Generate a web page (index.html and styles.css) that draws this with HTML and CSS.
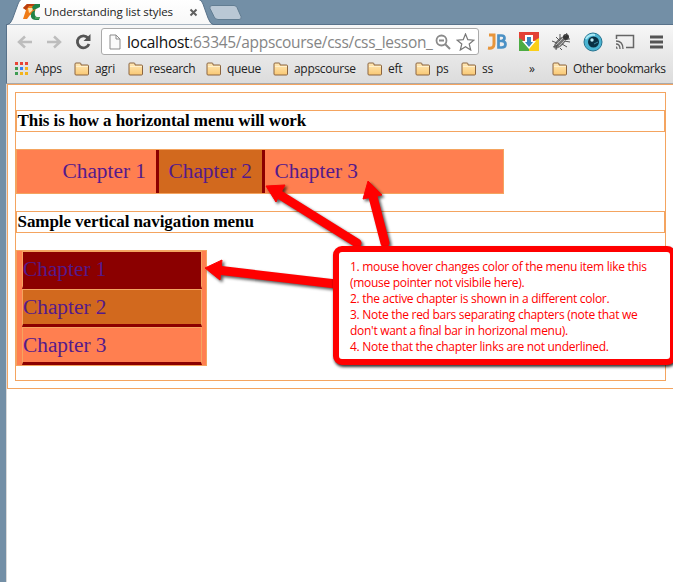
FILE: index.html
```html
<!DOCTYPE html>
<html lang="en">
<head>
<meta charset="utf-8">
<title>Understanding list styles</title>
<link rel="stylesheet" href="styles.css">
</head>
<body>
<svg class="defs" width="0" height="0">
  <defs>
    <linearGradient id="fold" x2="0" y2="1"><stop stop-color="#ffe9b8"/><stop offset="1" stop-color="#f9c873"/></linearGradient>
    <linearGradient id="tabfill" x2="0" y2="1"><stop stop-color="#fff"/><stop offset="1" stop-color="#f7f7f7"/></linearGradient>
    <symbol id="folder" viewBox="0 0 16 14"><path d="M1 12V2q0-1 1-1h4q1 0 1 1v1h6.500q1 0 1 1v8q0 1-1 1H2q-1 0-1-1z" fill="url(#fold)" stroke="#8b6540"/><path d="M2 4.500h12" stroke="#fff0cc"/></symbol>
  </defs>
</svg>
<header class="chrome">
  <div class="tabs">
    <svg class="tabshape" width="250" height="25" viewBox="0 0 250 25"><path d="M6.500 25Q11 24 12.500 19L18 4Q19 0 22 -1H198Q202 0 203 4L208 18Q210 24 214 25z" fill="url(#tabfill)" stroke="#58728a"/><path d="M212 5.500h22q2 0 3 2l4 9q1 3-2 3h-21q-3 0-4-3l-4-8q-1-3 2-3z" fill="#bac8d5" stroke="#627d92"/></svg>
    <svg class="favicon" width="18" height="16" viewBox="0 0 18 16"><path d="M0 4L4 0h8l1 4q-1 6-6 7l-3 4H0l3-9z" fill="#ef7b17"/><path d="M5 4h5q0 3-4 5z" fill="#ffe2a6"/><path d="M0 4l4-4h8l-1 2H6L3 6z" fill="#b93f10"/><path d="M17 0h-5L9 3l1 3 3-1 4-2z" fill="#218347"/><path d="M12 6q-5 2-4 7 1 3 5 3h3l1-3h-3q-3 0-2-7z" fill="#218347"/><path d="M12 14h4" stroke="#72bd70" fill="none"/></svg>
    <span class="title">Understanding list styles</span>
    <svg class="close" width="9" height="9" viewBox="0 0 9 9"><path d="M1.500 1.500l6 6m0-6l-6 6" stroke="#606060" stroke-width="2"/></svg>
  </div>
  <div class="toolbar">
    <svg class="back" width="16" height="14" viewBox="0 0 16 14"><path d="M15 7H2m6-5.500L2 7l6 5.500" fill="none" stroke="#bdbdbd" stroke-width="2.500"/></svg>
    <svg class="forward" width="16" height="14" viewBox="0 0 16 14"><path d="M1 7h13M8 1.500L14 7l-6 5.500" fill="none" stroke="#bdbdbd" stroke-width="2.500"/></svg>
    <svg class="reload" width="17" height="16" viewBox="0 0 17 16"><path d="M13 4A6 6 0 1 0 14 10" fill="none" stroke="#555" stroke-width="2.800"/><path d="M15.500 0v7H8.500z" fill="#555"/></svg>
    <div class="omnibox">
      <svg class="doc" width="12" height="16" viewBox="0 0 12 16"><path d="M1 1h6l4 4v10H1z" fill="#fafafa" stroke="#8b8b8b"/><path d="M7 1v4h4" fill="none" stroke="#8b8b8b"/></svg>
      <span class="url"><b>localhost</b>:63345/appscourse/css/css_lesson_</span>
      <svg class="lens" width="16" height="16" viewBox="0 0 16 16"><circle cx="6.500" cy="6.500" r="5" fill="none" stroke="#8a8a8a" stroke-width="1.800"/><path d="M4 6.500h5M10 10l5 5" stroke="#8a8a8a" stroke-width="2"/></svg>
      <svg class="star" width="19" height="18" viewBox="0 0 19 18"><path d="M9.500 1l2.300 5.700 6 .5-4.600 3.800 1.500 6-5.200-3.300L4.300 17l1.500-6L1.200 7.200l6-.5z" fill="#fff" stroke="#777" stroke-width="1.200"/></svg>
    </div>
    <div class="extensions">
      <svg width="20" height="18" viewBox="0 0 20 18"><path d="M2 2h5v9q0 5-6 4" fill="none" stroke="#e7953b" stroke-width="3"/><path d="M11.500 2.500h3q3 0 3 2.500t-3 3h-3 3q4 0 4 3.200t-4 3.300h-3z" fill="none" stroke="#4b91c5" stroke-width="2.700"/></svg>
      <svg width="20" height="20" viewBox="0 0 20 20"><path d="M0 0h20v19H0z" fill="#e34035"/><path d="M0 6l10 6v7H0z" fill="#4dac43"/><path d="M20 6l-10 6v7h10z" fill="#fbcf19"/><path d="M6 3h8v6h3l-7 8-7-8h3z" fill="#fff"/><path d="M8 5h4v5h2l-4 5-4-5h2z" fill="#3785bd"/></svg>
      <svg width="20" height="18" viewBox="0 0 20 18"><ellipse cx="9" cy="9.500" rx="8" ry="3.600" transform="rotate(-45 9 9.500)" fill="#777"/><circle cx="15" cy="4" r="3" fill="#333"/><path d="M1 8l5 2-1 7M5 4l4 4M9 15l2 2m0-6l5 3m-3-6l6 1M9 6V1m5 2l2-3m0 6l3 0M2 14l5-2" fill="none" stroke="#555"/><path d="M5 12l7-7M8 13l6-6" stroke="#bbb"/></svg>
      <svg width="20" height="20" viewBox="0 0 20 20"><circle cx="10" cy="10" r="9" fill="#4bb4d2" stroke="#267390"/><path d="M3 7q3-5 9-4" stroke="#a6e8f5" stroke-width="2" fill="none"/><circle cx="10.500" cy="10" r="5.500" fill="#092f42"/><circle cx="9" cy="8" r="1.700" fill="#bfeaf4"/><path d="M11 12l4-2" stroke="#3f879f"/></svg>
      <svg width="20" height="16" viewBox="0 0 20 16"><path d="M1.500 5V1.500h17v12H11" fill="none" stroke="#666" stroke-width="1.500"/><path d="M1 7q7 0 7 8M1 10q4 0 4 5M1 13q1 0 1 2" fill="none" stroke="#666" stroke-width="1.300"/></svg>
      <svg class="menu" width="14" height="14" viewBox="0 0 14 14"><path d="M1 2h13M1 7h13M1 12h13" stroke="#555" stroke-width="2.800"/></svg>
    </div>
  </div>
  <div class="bookmarks">
    <svg class="apps" width="14" height="14" viewBox="0 0 14 14"><path d="M0 0h3v3H0zm5 0h3v3H5zm5 0h3v3h-3z" fill="#e84435"/><path d="M0 5h3v3H0zm0 5h3v3H0z" fill="#3f9c53"/><path d="M5 5h3v3H5z" fill="#387ff5"/><path d="M10 5h3v3h-3zM5 10h3v3H5zm5 0h3v3h-3z" fill="#f3b31a"/></svg><span class="b-apps">Apps</span>
    <svg class="folder"><use href="#folder"/></svg><span class="b-agri">agri</span>
    <svg class="folder"><use href="#folder"/></svg><span class="b-research">research</span>
    <svg class="folder"><use href="#folder"/></svg><span class="b-queue">queue</span>
    <svg class="folder"><use href="#folder"/></svg><span class="b-course">appscourse</span>
    <svg class="folder"><use href="#folder"/></svg><span class="b-eft">eft</span>
    <svg class="folder"><use href="#folder"/></svg><span class="b-ps">ps</span>
    <svg class="folder"><use href="#folder"/></svg><span class="b-ss">ss</span>
    <span class="more">»</span>
    <svg class="folder"><use href="#folder"/></svg><span class="b-other">Other bookmarks</span>
  </div>
</header>
<main class="viewport">
  <div class="root-box">
    <div class="body-box">
      <h3>This is how a horizontal menu will work</h3>
      <ul class="horizontal"><li><a>Chapter 1</a></li><li class="active"><a>Chapter 2</a></li><li><a>Chapter 3</a></li></ul>
      <h3>Sample vertical navigation menu</h3>
      <ul class="vertical"><li class="hover"><a>Chapter 1</a></li><li class="active"><a>Chapter 2</a></li><li><a>Chapter 3</a></li></ul>
    </div>
  </div>
</main>
<svg class="arrows" width="673" height="582" viewBox="0 0 673 582">
  <g fill="red" stroke="red">
    <path d="M280 195L357 243M372 193L385 243M217 270L336 284" stroke-width="9" stroke-linecap="round"/>
    <path d="M266 186l19-1-9 17zM368 181l14 14-19 4zM205 268l17-8-2 20z" stroke-linejoin="round"/>
  </g>
</svg>
<aside class="callout">
  <p>1. mouse hover changes color of the menu item like this</p>
  <p>(mouse pointer not visibile here).</p>
  <p>2. the active chapter is shown in a different color.</p>
  <p>3. Note the red bars separating chapters (note that we</p>
  <p>don't want a final bar in horizonal menu).</p>
  <p>4. Note that the chapter links are not underlined.</p>
</aside>
</body>
</html>
```
FILE: styles.css
```css
* { box-sizing: border-box; }
body {
  margin: 0;
  width: 673px;
  height: 582px;
  overflow: hidden;
  position: relative;
  background: #738fa6;
  font-family: "Open Sans", "Noto Sans", sans-serif;
}
svg { display: block; flex: none; }
.defs { position: absolute; }
.chrome { height: 84px; }
.tabs {
  position: relative;
  height: 24px;
  display: flex;
  align-items: center;
  padding-left: 23px;
}
.tabshape { position: absolute; left: 0; top: 0; z-index: 1; }
.favicon, .title, .close { position: relative; z-index: 2; }
.title {
  margin-left: 3px;
  width: 145px;
  font-size: 11.5px;
  line-height: 24px;
  letter-spacing: -.1px;
  white-space: nowrap;
  color: #222;
}
.toolbar {
  height: 34px;
  margin-left: 6px;
  border-top: 1px solid #58728a;
  border-left: 1px solid #58728a;
  background: linear-gradient(#f7f7f7, #e7e7e7);
  display: flex;
  align-items: center;
  padding-left: 10px;
}
.forward { margin-left: 13px; }
.reload { margin-left: 13px; }
.omnibox {
  width: 378px;
  height: 27px;
  margin-left: 9px;
  border: 1px solid #aaa;
  border-radius: 3px;
  background: #fff;
  display: flex;
  align-items: center;
  padding-left: 7px;
}
.url {
  width: 307px;
  margin-left: 6px;
  font-size: 15.5px;
  letter-spacing: -.3px;
  line-height: 24px;
  white-space: nowrap;
  color: #858585;
}
.url b { font-weight: 400; color: #111; }
.lens { margin-left: 1px; }
.star { margin-left: 5px; }
.extensions {
  display: flex;
  align-items: center;
  gap: 12px;
  margin-left: 8px;
}
.menu { margin-left: 2px; }
.bookmarks {
  height: 26px;
  margin-left: 6px;
  padding: 0 0 3px 8px;
  border-left: 1px solid #58728a;
  border-bottom: 1px solid #aaa;
  background: linear-gradient(#e7e7e7, #dcdcdc);
  display: flex;
  align-items: center;
  font-size: 12px;
  letter-spacing: -.3px;
  line-height: 20px;
  white-space: nowrap;
  color: #222;
}
.folder { width: 16px; height: 14px; margin-right: 5px; }
.apps { margin-right: 6px; }
.b-apps { width: 39px; }
.b-agri { width: 33px; }
.b-research { width: 57px; }
.b-queue { width: 46px; }
.b-course { width: 73px; }
.b-eft { width: 27px; }
.b-ps { width: 25px; }
.b-ss { width: 47px; }
.more { width: 23px; }
.b-other { letter-spacing: -.4px; }
.viewport {
  height: 498px;
  margin-left: 6px;
  border-left: 1px solid #d8d8d8;
  background: #fff;
}
.root-box {
  width: 667px;
  height: 305px;
  padding: 7px 7px 0;
  border: 1px solid #f4a460;
  border-right: 0;
}
.body-box {
  width: 651px;
  height: 289px;
  border: 1px solid #f4a460;
  padding-top: 17px;
  font-family: "Liberation Serif", serif;
}
h3 {
  height: 22px;
  margin: 0 0 17px;
  padding-left: .5px;
  border: 1px solid #f4a460;
  font-size: 17px;
  letter-spacing: -.07px;
  line-height: 20px;
  white-space: nowrap;
}
ul { list-style: none; margin: 0; padding: 0; }
a { color: #551a8b; font-size: 21.33px; }
.horizontal {
  width: 488px;
  height: 45px;
  margin-bottom: 17px;
  padding-left: 36px;
  border: 1px solid #f4a460;
  background: #ff7f50;
  display: flex;
}
.horizontal li {
  width: 106px;
  padding-left: 9.5px;
  border-right: 3px solid #8b0000;
  line-height: 43px;
  white-space: nowrap;
}
.horizontal li:last-child { border: 0; }
.active { background: #d2691e; }
.vertical {
  width: 191px;
  height: 116px;
  padding: 0 4px 0 5px;
  border: 1px solid #f4a460;
  background: #ff7f50;
}
.vertical li {
  height: 38px;
  border: 1px solid #f4a460;
  border-bottom: 3px solid #8b0000;
  line-height: 34px;
}
.hover { background: #8b0000; }
.arrows {
  position: absolute;
  left: 0;
  top: 0;
  filter: drop-shadow(2px 2px 1.5px rgba(0, 0, 0, .65));
}
.callout {
  position: absolute;
  left: 333px;
  top: 246px;
  width: 343px;
  height: 119px;
  padding: 7px 11px;
  border: 6px solid red;
  border-radius: 9px;
  background: #fff;
  box-shadow: 1px 2px 3px rgba(0, 0, 0, .8);
  color: red;
  font-size: 12px;
  letter-spacing: -.29px;
  line-height: 16px;
  white-space: nowrap;
}
.callout p { margin: 0; }
```
